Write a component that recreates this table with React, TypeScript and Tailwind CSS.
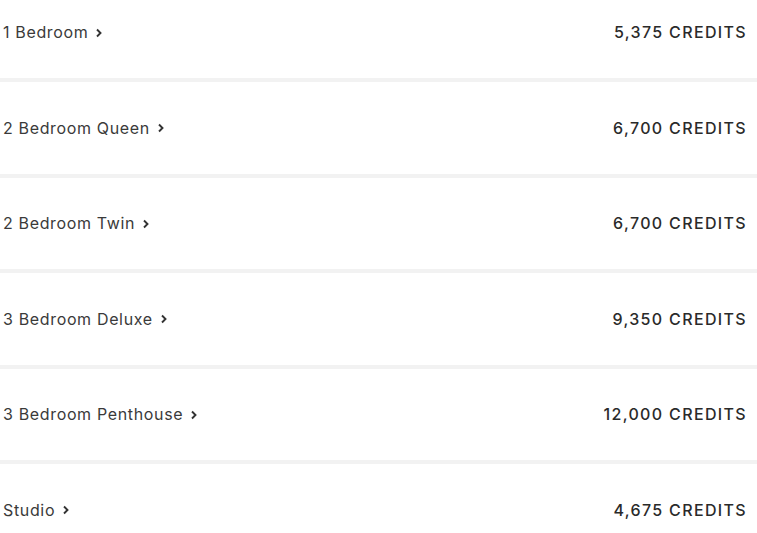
const rooms = [
  { name: '1 Bedroom', credits: '5,375' },
  { name: '2 Bedroom Queen', credits: '6,700' },
  { name: '2 Bedroom Twin', credits: '6,700' },
  { name: '3 Bedroom Deluxe', credits: '9,350' },
  { name: '3 Bedroom Penthouse', credits: '12,000' },
  { name: 'Studio', credits: '4,675' },
]

function Chevron() {
  return (
    <svg width="8" height="10" viewBox="0 0 8 10" className="ml-[7px] mt-[1px]">
      <polyline points="2,1.5 5.5,5 2,8.5" fill="none" stroke="#333" strokeWidth="1.9" />
    </svg>
  )
}

export default function App() {
  return (
    <div className="w-[757px] h-[533px] overflow-hidden bg-white font-['Inter',sans-serif]">
      <div className="-mt-[13.5px]">
        {rooms.map((r, i) => (
          <div
            key={r.name}
            className={`flex items-center justify-between h-[95.5px] pl-[3px] pr-[10px] border-b-4 ${
              i < rooms.length - 1 ? 'border-[#f2f2f2]' : 'border-transparent'
            }`}
          >
            <div className="flex items-center text-[16px] text-[#3a3a3a] tracking-[0.65px]">
              {r.name}
              <Chevron />
            </div>
            <div className="text-[16px] font-medium text-[#2a2a2a] tracking-[1.35px]">
              {r.credits} CREDITS
            </div>
          </div>
        ))}
      </div>
    </div>
  )
}
